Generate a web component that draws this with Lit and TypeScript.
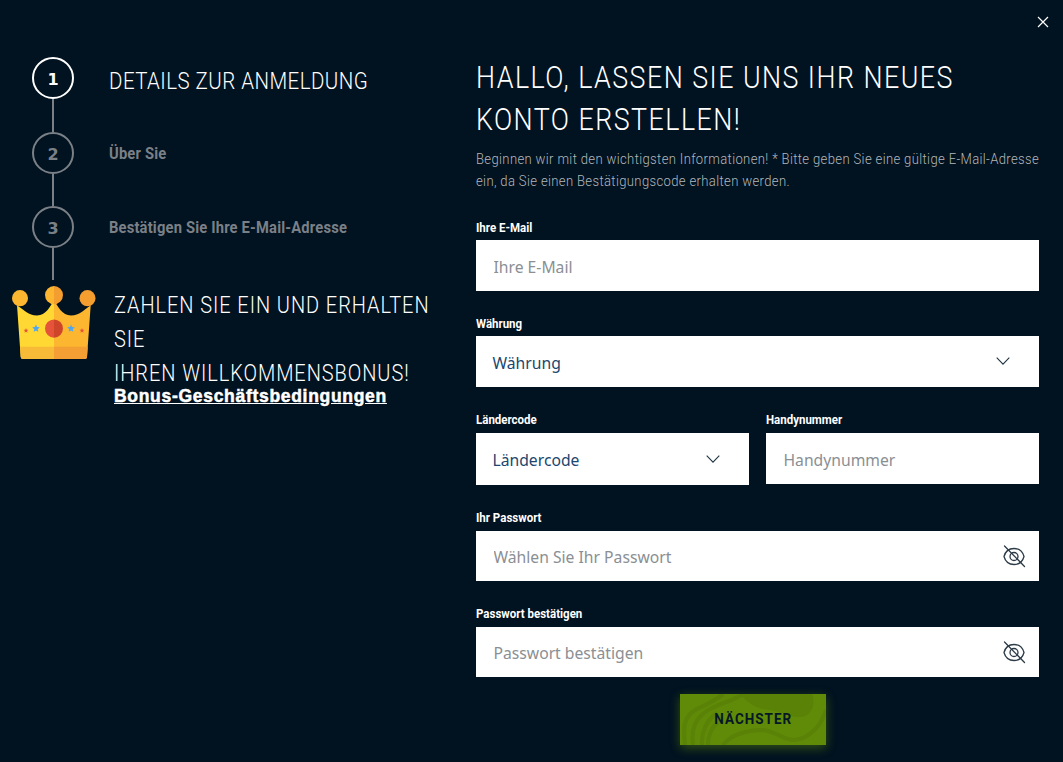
import { LitElement, html, css, svg } from "lit";
import { customElement } from "lit/decorators.js";

const eye = html`<svg class="eye" viewBox="0 0 24 24" fill="none" stroke="#2b3b48" stroke-width="1.300" stroke-linecap="round">
  <path d="M2 12.500C3.500 7 7.500 4.500 12 4.500S20.500 7 22 12.500C20.500 18 16.500 20.500 12 20.500S3.500 18 2 12.500z"/>
  <circle cx="12" cy="12.500" r="4"/>
  <path d="M2.500 2 22.500 22.500"/>
</svg>`;
const chevron = html`<svg class="chev" viewBox="0 0 14 8" fill="none" stroke="#1f3342" stroke-width="1.100"><path d="M.7.7 7 7.200 13.300.7"/></svg>`;
const star = (cx: number, cy: number, r: number, fill: string) => {
  const pts: string[] = [];
  for (let i = 0; i < 10; i++) {
    const a = -Math.PI / 2 + (i * Math.PI) / 5;
    const rr = i % 2 ? r * 0.45 : r;
    pts.push(`${cx + rr * Math.cos(a)},${cy + rr * Math.sin(a)}`);
  }
  return svg`<polygon points=${pts.join(" ")} fill=${fill}/>`;
};

@customElement("app-root")
export class AppRoot extends LitElement {
  static styles = css`
    :host { display: block; width: 1063px; height: 762px; background: #011220; overflow: hidden; position: relative; color: #fff; font-family: "Roboto", sans-serif; }
    .close { position: absolute; top: 16px; right: 14px; width: 12px; height: 12px; }
    .page { display: flex; height: 100%; box-sizing: border-box; padding-right: 24px; }
    .left { width: 476px; flex: none; display: flex; flex-direction: column; padding-top: 57px; box-sizing: border-box; }
    .step { display: flex; align-items: center; padding-left: 32px; gap: 35px; height: 42px; }
    .num { width: 42px; height: 42px; box-sizing: border-box; border: 2px solid #7b8087; border-radius: 50%; display: flex; align-items: center; justify-content: center; padding-top: 3px; font: 700 16px "DejaVu Sans", sans-serif; color: #7b8087; flex: none; }
    .step.on .num { border-color: #fff; color: #fff; }
    .step-title { font: 700 16px "Roboto", sans-serif; color: #7b8087; letter-spacing: .2px; transform: scaleX(.92); transform-origin: left; white-space: nowrap; padding-top: 1px; }
    .step.on .step-title { font-weight: 300; font-size: 23.500px; color: #fff; letter-spacing: .55px; transform: scaleX(.87); padding-top: 6px; }
    .line { width: 2px; background: #7b8087; margin-left: 53px; transform: translateX(-1px); flex: none; }
    .bonus { display: flex; margin-top: 6px; padding-left: 12px; gap: 18px; }
    .crown { width: 84px; height: 75px; flex: none; }
    .bonus-text { font-size: 23.500px; font-weight: 300; line-height: 34px; letter-spacing: 1.100px; color: #fff; margin-top: 2px; width: 388px; transform: scaleX(.85); transform-origin: left; }
    .link { display: block; font: 700 17.500px/16px "Liberation Sans", sans-serif; -webkit-text-stroke: .5px #fff; color: #fff; text-decoration: underline; letter-spacing: .7px; margin-top: -2px; white-space: nowrap; }
    .right { flex: 1; padding-top: 57px; display: flex; flex-direction: column; min-width: 0; }
    h1 { margin: 0; font-size: 30.500px; line-height: 42px; font-weight: 300; letter-spacing: 1.650px; width: 640px; transform: scaleX(.88); transform-origin: left; }
    p { margin: 8px 0 0; font-size: 14.500px; font-weight: 300; line-height: 22px; color: #b3b7bb; letter-spacing: .4px; white-space: nowrap; transform: scaleX(.9); transform-origin: left; }
    .field { display: flex; flex-direction: column; }
    label { font: 700 12.500px/16px "Roboto", sans-serif; color: #fff; height: 16px; margin-bottom: 5px; align-self: flex-start; white-space: nowrap; transform: scaleX(.92); transform-origin: left; }
    .field.top label { margin-bottom: 4px; }
    .box { height: 51px; background: #fff; box-sizing: border-box; display: flex; align-items: center; font: 400 15.700px "Noto Sans", sans-serif; }
    .box.sel-row { height: 52px; }
    .box.pw { height: 50px; }
    .box input { border: 0; outline: 0; background: transparent; flex: 1; min-width: 0; padding: 2px 0 0 17.500px; font: inherit; color: #1f3342; }
    .box input::placeholder { color: #8a8f94; opacity: 1; }
    .sel { color: #20466e; padding: 2px 29px 0 16.500px; justify-content: space-between; }
    .chev { width: 14px; height: 8px; margin-top: -3px; flex: none; }
    .eye { width: 24px; height: 24px; margin-right: 13px; flex: none; }
    .fields { display: flex; flex-direction: column; margin-top: 27px; gap: 25px; }
    .row { display: flex; gap: 17px; }
    .row .field { flex: 1; min-width: 0; }
    .glow { align-self: center; box-shadow: 0 3px 10px rgba(111,160,10,.45); margin: 17px 0 0 -9px; }
    .btn { width: 146px; height: 51px; padding-bottom: 2px; box-sizing: border-box; background: #5f8b08; position: relative; overflow: hidden; display: flex; align-items: center; justify-content: center; }
    .tex { position: absolute; inset: 0; width: 100%; height: 100%; }
    .btn span { position: relative; font: 700 15px "Roboto", sans-serif; color: #061826; letter-spacing: 1.100px; transform: scaleX(.9); }
  `;
  render() {
    return html`
      <svg class="close" viewBox="0 0 12 12" stroke="#fff" stroke-width="1.200"><path d="M1 1l10 10M11 1 1 11"/></svg>
      <div class="page">
        <div class="left">
          <div class="step on"><div class="num">1</div><div class="step-title">DETAILS ZUR ANMELDUNG</div></div>
          <div class="line" style="height:33px"></div>
          <div class="step"><div class="num">2</div><div class="step-title">Über Sie</div></div>
          <div class="line" style="height:32px"></div>
          <div class="step"><div class="num">3</div><div class="step-title">Bestätigen Sie Ihre E-Mail-Adresse</div></div>
          <div class="line" style="height:32px"></div>
          <div class="bonus">
            <svg class="crown" viewBox="0 0 84 74" preserveAspectRatio="none">
              <path d="M5 19 L8.700 70Q8.800 72 11 72H42V14C38 20 34 29 25 29C16 29 13 24 5 19Z" fill="#ffd833"/>
              <path d="M78.700 19 L75 70Q74.900 72 73 72H42V14C46 20 50 29 59 29C68 29 71 24 78.700 19Z" fill="#fdb62f"/>
              <path d="M8 60H42V72H11Q8.800 72 8.700 70Z" fill="#f7bb38"/>
              <path d="M42 60H75.700L75 70Q74.900 72 73 72H42Z" fill="#f49f33"/>
              <circle cx="8" cy="12" r="8" fill="#fdb62f"/>
              <circle cx="75.500" cy="12" r="8" fill="#f49e2f"/>
              <path d="M42 0a9 9 0 0 0 0 18z" fill="#fdb62f"/>
              <path d="M42 0a9 9 0 0 1 0 18z" fill="#f49e2f"/>
              <path d="M42 33a9 9 0 0 0 0 18z" fill="#e5533a"/>
              <path d="M42 33a9 9 0 0 1 0 18z" fill="#cf4529"/>
              ${star(24, 42, 4, "#4ea7f2")}${star(59, 42, 4, "#4ea7f2")}${star(14, 44, 2.500, "#e5533a")}${star(70, 44, 2.500, "#e5533a")}
            </svg>
            <div>
              <div class="bonus-text">ZAHLEN SIE EIN UND ERHALTEN SIE<br />IHREN WILLKOMMENSBONUS!</div>
              <a class="link">Bonus-Geschäftsbedingungen</a>
            </div>
          </div>
        </div>
        <div class="right">
          <h1>HALLO, LASSEN SIE UNS IHR NEUES KONTO ERSTELLEN!</h1>
          <p>Beginnen wir mit den wichtigsten Informationen! * Bitte geben Sie eine gültige E-Mail-Adresse<br />ein, da Sie einen Bestätigungscode erhalten werden.</p>
          <div class="fields">
            <div class="field top"><label>Ihre E-Mail</label><div class="box"><input placeholder="Ihre E-Mail" /></div></div>
            <div class="field top"><label>Währung</label><div class="box sel">Währung ${chevron}</div></div>
            <div class="row">
              <div class="field"><label>Ländercode</label><div class="box sel sel-row">Ländercode ${chevron}</div></div>
              <div class="field"><label>Handynummer</label><div class="box"><input placeholder="Handynummer" /></div></div>
            </div>
            <div class="field"><label>Ihr Passwort</label><div class="box pw"><input placeholder="Wählen Sie Ihr Passwort" />${eye}</div></div>
            <div class="field"><label>Passwort bestätigen</label><div class="box pw"><input placeholder="Passwort bestätigen" />${eye}</div></div>
          </div>
          <div class="glow"><div class="btn">
            <svg class="tex" viewBox="0 0 146 51" fill="none" stroke="#598207" stroke-width="4">
              <path d="M5 51C3 34 3 22 17 15C28 10 36 6 43 0"/>
              <path d="M13 51C11 36 14 24 30 15C42 9 54 6 63 0"/>
              <path d="M22 51C21 40 26 26 37 19"/>
              <path d="M28 51C28 42 31 34 38 28"/>
              <path d="M43 51C50 42 62 37 80 36C95 36 103 46 113 46C125 46 140 36 146 16"/>
              <path d="M60 0C70 12 82 16 90 16C100 17 110 24 120 23C132 22 136 10 132 0Z" fill="#598207" stroke="none"/>
            </svg>
            <span>NÄCHSTER</span>
          </div></div>
        </div>
      </div>
    `;
  }
}
